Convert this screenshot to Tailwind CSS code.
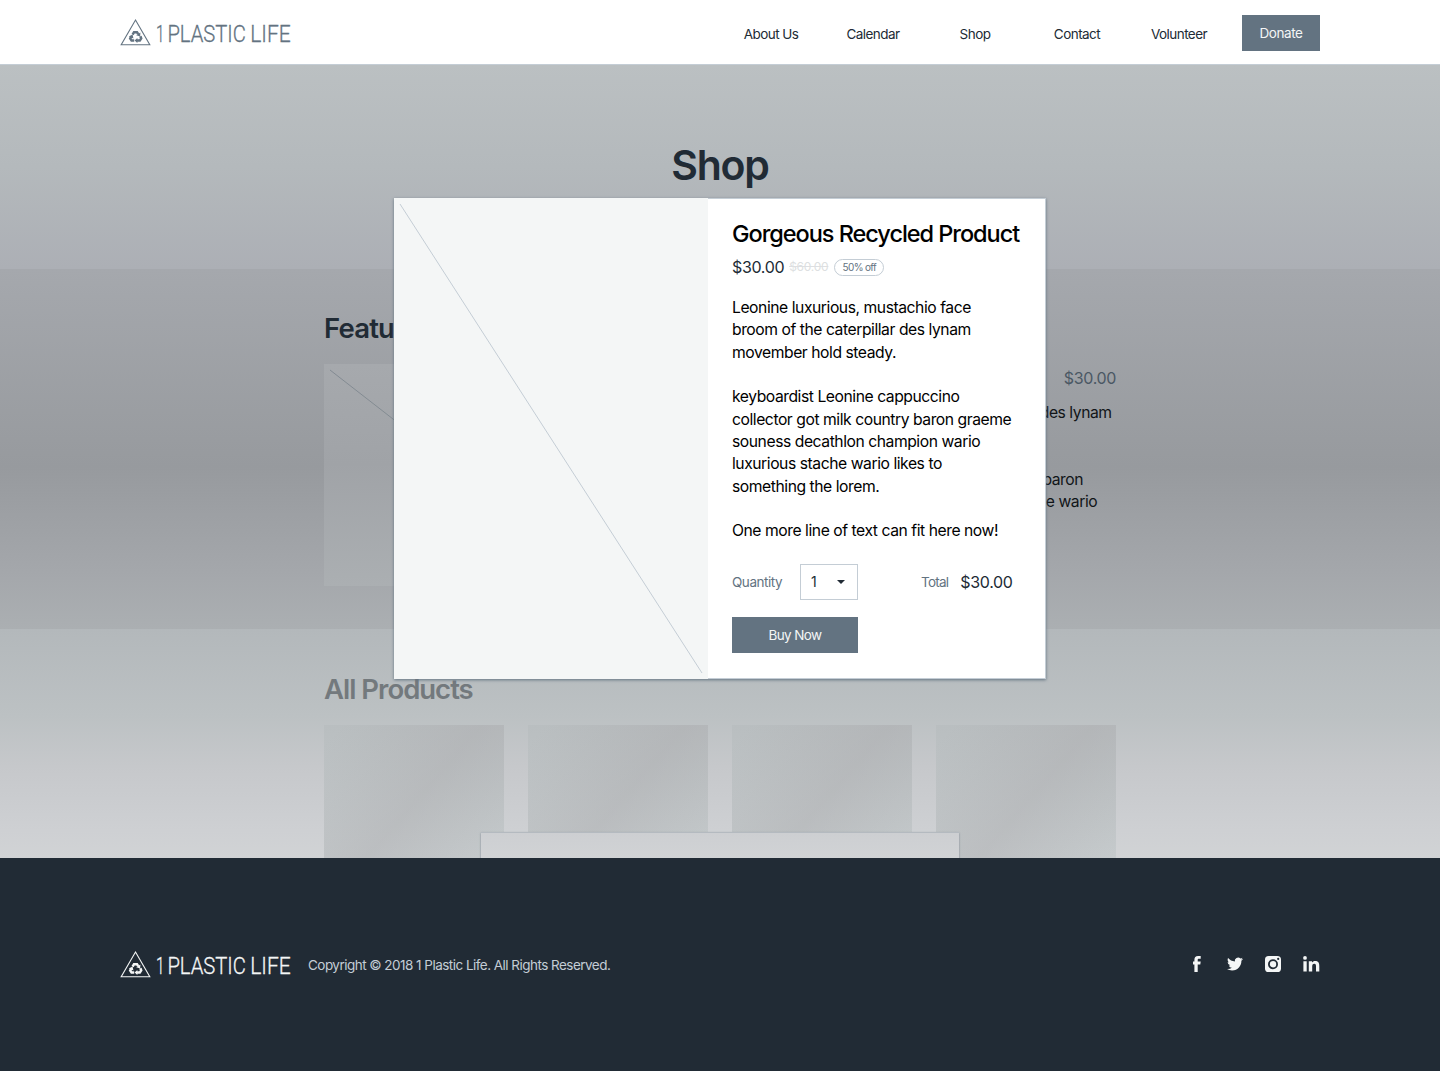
<!DOCTYPE html>
<html lang="en">
<head>
<meta charset="utf-8">
<title>1 Plastic Life – Shop</title>
<script src="https://cdn.jsdelivr.net/npm/@tailwindcss/browser@4"></script>
</head>
<body class="font-[Inter,sans-serif] bg-[#212b35] text-[#212b35] w-[1440px] h-[1071px] overflow-hidden">
<svg class="hidden">
  <symbol id="logo" viewBox="0 0 172 30">
    <path d="M15.5 2 L29.8 26.8 H1.2 Z" fill="none" stroke="currentColor" stroke-width="1.1"/>
    <g fill="none" stroke="currentColor" stroke-width="2.5">
      <path d="M12.6 16.6 L14 14.2 H17 L18.2 16.2"/>
      <path d="M20.4 18.2 L21.2 20.4 L19.8 22.6 H16.8"/>
      <path d="M14.2 22.6 H11.6 L10.2 20.4 L11.4 18.4"/>
    </g>
    <g fill="currentColor">
      <path d="M16.2 17.2 L20.4 14.6 L20.2 18.4 Z"/>
      <path d="M17.4 19.9 V25 L14.6 22.5 Z"/>
      <path d="M8.8 18.6 L12.6 16.6 L13.4 20.4 Z"/>
    </g>
    <g fill="currentColor" stroke="currentColor" stroke-width="0.3" font-family="Roboto, sans-serif" font-weight="300" font-size="24.4">
      <text x="36" y="23.6" textLength="8.5" lengthAdjust="spacingAndGlyphs">1</text>
      <text x="47.4" y="23.6" textLength="78.5" lengthAdjust="spacingAndGlyphs">PLASTIC</text>
      <text x="130.2" y="23.6" textLength="40.5" lengthAdjust="spacingAndGlyphs">LIFE</text>
    </g>
  </symbol>
</svg>

<header class="h-[65px] bg-white border-b border-[#c4cdd5]">
  <div class="w-[1200px] mx-auto h-16 flex justify-between items-start">
    <svg class="w-[172px] h-[30px] mt-[18px] text-[#637381]"><use href="#logo"/></svg>
    <nav class="flex gap-6 mt-[15px] text-[13.5px] tracking-[-0.55px]">
      <a class="w-[78px] h-9 pt-[3px] flex items-center justify-center">About Us</a>
      <a class="w-[78px] h-9 pt-[3px] flex items-center justify-center">Calendar</a>
      <a class="w-[78px] h-9 pt-[3px] flex items-center justify-center">Shop</a>
      <a class="w-[78px] h-9 pt-[3px] flex items-center justify-center">Contact</a>
      <a class="w-[78px] h-9 pt-[3px] flex items-center justify-center">Volunteer</a>
      <a class="w-[78px] h-9 pt-px flex items-center justify-center bg-[#637381] text-[#f4f6f6] tracking-[-0.4px]">Donate</a>
    </nav>
  </div>
</header>

<main class="relative h-[793px] overflow-hidden">
  <section class="h-[204px] bg-[linear-gradient(#bbc0c2,#b4b9bc_50%,#acafb5)]">
    <h1 class="pt-[75px] text-center text-[41px] leading-[50px] font-semibold tracking-[-1.2px]">Shop</h1>
  </section>

  <section class="h-[360px] bg-[linear-gradient(#a5a8ad,#979a9e_55%,#a4a7ab_84%,#abafb2)]">
    <div class="w-[792px] mx-auto pt-[43px]">
      <h2 class="text-[27.5px] leading-8 font-semibold tracking-[-0.8px]">Featured Product</h2>
      <div class="flex gap-6 mt-5">
        <div class="w-[282px] h-[222px] shrink-0 bg-[linear-gradient(#a6a9ad,#a0a3a7_45%,#abafb2)]">
          <svg class="w-[282px] h-[222px]"><path d="M6 6 L276 216" stroke="#838b92"/></svg>
        </div>
        <div class="flex-1 text-[15.7px] leading-[22.3px] tracking-[-0.45px]">
          <div class="flex justify-end pt-[3px] h-6 text-[#4b5864] text-base leading-[22px] tracking-[-0.35px]">$30.00</div>
          <p class="mt-[13.8px] text-[#111518] whitespace-nowrap">Leonine luxurious, mustachio face broom of the caterpillar des lynam<br>movember hold steady.<br><br>keyboardist Leonine cappuccino collector got milk country baron<br>graeme souness decathlon champion wario luxurious stache wario</p>
        </div>
      </div>
    </div>
  </section>

  <section class="h-[229px] bg-[linear-gradient(#b3b8bb,#bcc1c3_38%,#c6c8cb_60%,#ced0d3_88%,#d1d3d5)]">
    <div class="w-[792px] mx-auto pt-11">
      <h2 class="text-[27.5px] leading-8 font-semibold tracking-[-1px] text-[#73797d]">All Products</h2>
      <div class="grid grid-cols-4 gap-6 mt-5">
        <div class="h-[180px] bg-[linear-gradient(#b9bec0,#cbd0d2)]"><div class="h-full bg-[linear-gradient(131deg,#a8a6a900_5%,#a8a6a955_47%,#a8a6a900_90%)]"></div></div>
        <div class="h-[180px] bg-[linear-gradient(#b9bec0,#cbd0d2)]"><div class="h-full bg-[linear-gradient(131deg,#a8a6a900_5%,#a8a6a955_47%,#a8a6a900_90%)]"></div></div>
        <div class="h-[180px] bg-[linear-gradient(#b9bec0,#cbd0d2)]"><div class="h-full bg-[linear-gradient(131deg,#a8a6a900_5%,#a8a6a955_47%,#a8a6a900_90%)]"></div></div>
        <div class="h-[180px] bg-[linear-gradient(#b9bec0,#cbd0d2)]"><div class="h-full bg-[linear-gradient(131deg,#a8a6a900_5%,#a8a6a955_47%,#a8a6a900_90%)]"></div></div>
      </div>
    </div>
  </section>

  <!-- lower panel sliding out from under the footer -->
  <div class="absolute left-[481px] top-[767px] w-[478px] h-10 bg-[linear-gradient(#cdcfd2,#d1d3d5_26px)] border-t border-[#b4bac0] shadow-[0_1px_2px_#7c8791]"></div>

  <!-- product dialog -->
  <div class="absolute left-[394px] top-[133px] w-[652px] h-[481px] flex bg-white shadow-[0_1px_3px_#637381]">
    <div class="w-[314px] bg-[#f4f6f6]">
      <svg class="w-[314px] h-[481px]"><path d="M6 6 L308 475" stroke="#c4cdd5"/></svg>
    </div>
    <div class="flex-1 pl-6 pt-[19px] border-y border-r border-[#c4cdd5]">
      <h3 class="text-[23.5px] leading-8 font-medium tracking-[-1.04px] text-black whitespace-nowrap">Gorgeous Recycled Product</h3>
      <div class="flex items-center mt-1 h-[26px]">
        <span class="text-base tracking-[-0.35px]">$30.00</span>
        <span class="ml-[5px] text-xs line-through tracking-[-0.25px] text-[#dddfe1]">$60.00</span>
        <span class="ml-[6px] mt-px w-[50px] h-[17px] rounded-full border border-[#c4cdd5] flex items-center justify-center text-[10px] tracking-[-0.65px] text-[#637381]"><span class="whitespace-nowrap">50% off</span></span>
      </div>
      <p class="mt-[17.2px] text-[15.7px] leading-[22.3px] tracking-[-0.45px] text-black whitespace-nowrap">Leonine luxurious, mustachio face<br>broom of the caterpillar des lynam<br>movember hold steady.<br><br>keyboardist Leonine cappuccino<br>collector got milk country baron graeme<br>souness decathlon champion wario<br>luxurious stache wario likes to<br>something the lorem.<br><br>One more line of text can fit here now!</p>
      <div class="flex items-center mt-[21.5px] h-9">
        <span class="w-[68px] shrink-0 text-[13.5px] tracking-[-0.45px] text-[#637381]">Quantity</span>
        <div class="w-[58px] h-9 border border-[#c4cdd5] flex items-center justify-between pl-[10px] pr-[12px] text-sm">
          <span>1</span>
          <svg class="w-2 h-1"><path d="M0 0 H8 L4 4 Z" fill="#212b35"/></svg>
        </div>
        <span class="ml-[63px] text-[13.5px] tracking-[-0.75px] text-[#637381]">Total</span>
        <span class="ml-3 text-base tracking-[-0.35px]">$30.00</span>
      </div>
      <button class="mt-[17px] w-[126px] h-9 pt-px bg-[#637381] text-[#f4f6f6] text-[13.5px] tracking-[-0.6px]">Buy Now</button>
    </div>
  </div>
</main>

<footer class="h-[213px] bg-[#212b35]">
  <div class="w-[1200px] mx-auto pt-[92px] flex items-start">
    <svg class="w-[172px] h-[30px] text-[#f4f6f6]"><use href="#logo"/></svg>
    <p class="ml-4 mt-[5px] text-[13.5px] leading-5 tracking-[-0.53px] text-[#c4cdd5]">Copyright © 2018 1 Plastic Life. All Rights Reserved.</p>
    <div class="ml-auto mt-[6px] flex gap-[22px] text-[#f4f6f6]">
      <svg class="w-4 h-4" viewBox="0 0 16 16" fill="currentColor"><path d="M5.4 16V8.4H4V5.6h1.4V3.9C5.4 1.5 6.5 0 9.1 0H11.7V2.8H10c-1.1 0-1.3.5-1.3 1.2v1.6h3l-.4 2.8H8.7V16Z"/></svg>
      <svg class="w-4 h-4" viewBox="0 0 24 24" fill="currentColor"><path d="M23.953 4.57a10 10 0 01-2.825.775 4.958 4.958 0 002.163-2.723c-.951.555-2.005.959-3.127 1.184a4.92 4.92 0 00-8.384 4.482C7.69 8.095 4.067 6.13 1.64 3.162a4.822 4.822 0 00-.666 2.475c0 1.71.87 3.213 2.188 4.096a4.904 4.904 0 01-2.228-.616v.06a4.923 4.923 0 003.946 4.827 4.996 4.996 0 01-2.212.085 4.936 4.936 0 004.604 3.417 9.867 9.867 0 01-6.102 2.105c-.39 0-.779-.023-1.17-.067a13.995 13.995 0 007.557 2.209c9.053 0 13.998-7.496 13.998-13.985 0-.21 0-.42-.015-.63A9.935 9.935 0 0024 4.59z"/></svg>
      <svg class="w-4 h-4" viewBox="0 0 16 16"><rect width="16" height="16" rx="3.6" fill="currentColor"/><circle cx="8" cy="8.2" r="4.1" fill="none" stroke="#212b35" stroke-width="1.8"/><circle cx="13.2" cy="2.9" r="1.1" fill="#212b35"/></svg>
      <svg class="w-[17px] h-4" viewBox="0 0 17 16" fill="currentColor"><circle cx="2" cy="1.9" r="1.9"/><path d="M.4 5.2H3.7V15.5H.4ZM5.8 5.2H9V6.6C9.6 5.6 10.7 4.9 12.2 4.9c3.4 0 4.1 2.2 4.1 5V15.5H13V10.5c0-1.2 0-2.7-1.7-2.7S9.2 9.1 9.2 10.4V15.5H5.8Z"/></svg>
    </div>
  </div>
</footer>
</body>
</html>
